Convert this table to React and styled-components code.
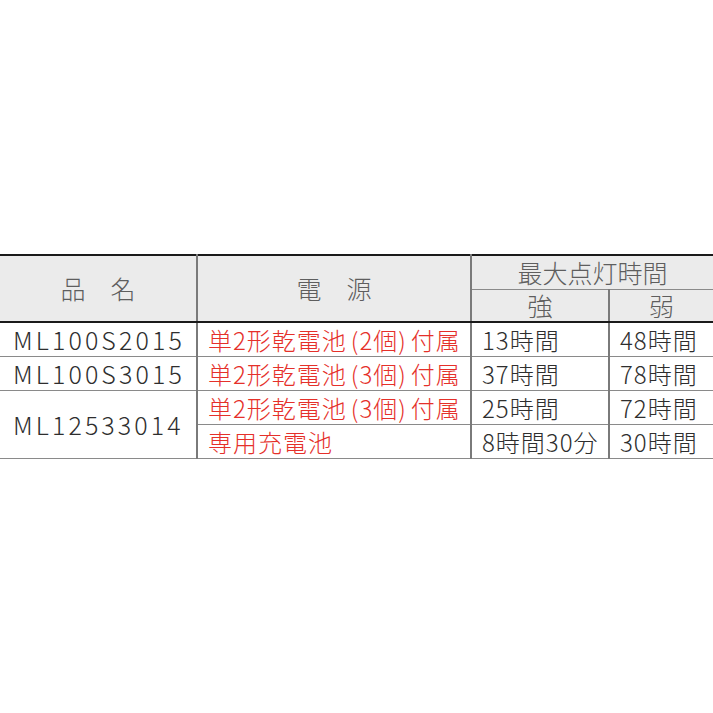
import React from 'react';
import styled, { createGlobalStyle } from 'styled-components';

const GlobalStyle = createGlobalStyle`
  html, body {
    margin: 0;
    padding: 0;
    background: #fff;
  }
`;

const Page = styled.div`
  width: 713px;
  height: 713px;
  display: flex;
  align-items: center;
  font-family: "Noto Sans CJK JP", "Noto Sans", sans-serif;
  font-weight: 300;
`;

const Table = styled.table`
  width: 713px;
  border-collapse: collapse;
  table-layout: fixed;
  border-top: 2px solid #1a1a1a;
  border-bottom: 1px solid #8a8a8a;
`;

const HeadCell = styled.th`
  background: #ebebeb;
  color: #5e5e5e;
  font-weight: 300;
  font-size: 25px;
  line-height: 1;
  text-align: center;
  padding: 0;
  height: ${(p) => p.h || 32}px;
  border-left: ${(p) => (p.first ? 'none' : '2px solid #7a7a7a')};
  border-bottom: ${(p) => (p.sub ? '1px solid #8a8a8a' : '2px solid #1a1a1a')};
`;

const Cell = styled.td`
  color: ${(p) => (p.red ? '#e5302a' : '#2e2e2e')};
  font-size: ${(p) => (p.code ? 25 : 24)}px;
  letter-spacing: ${(p) => (p.code ? 3.1 : 1)}px;
  line-height: 1;
  padding: 0 0 0 ${(p) => (p.code ? 13 : 10)}px;
  height: ${(p) => p.h || 33}px;
  white-space: nowrap;
  border-left: ${(p) => (p.first ? 'none' : '2px solid #7a7a7a')};
  border-bottom: 1px solid #8a8a8a;
`;

// half-width parens with a little air, as in the printed table
const Paren = styled.span`
  margin: ${(p) => (p.open ? '0 0 0 4px' : '0 4px 0 0')};
`;

const Power = ({ n }) => (
  <>
    単2形乾電池<Paren open>(</Paren>{n}個<Paren>)</Paren>付属
  </>
);

const rows = [
  { code: 'ML100S2015', n: 2, strong: '13時間', weak: '48時間' },
  { code: 'ML100S3015', n: 3, strong: '37時間', weak: '78時間' },
];

const App = () => (
  <Page>
    <GlobalStyle />
    <Table>
      <colgroup>
        <col style={{ width: 197 }} />
        <col style={{ width: 274 }} />
        <col style={{ width: 138 }} />
        <col style={{ width: 104 }} />
      </colgroup>
      <thead>
        <tr>
          <HeadCell first rowSpan={2}>品　名</HeadCell>
          <HeadCell rowSpan={2}>電　源</HeadCell>
          <HeadCell colSpan={2} sub h={33}>最大点灯時間</HeadCell>
        </tr>
        <tr>
          <HeadCell h={31}>強</HeadCell>
          <HeadCell h={31}>弱</HeadCell>
        </tr>
      </thead>
      <tbody>
        {rows.map((r) => (
          <tr key={r.code}>
            <Cell first code h={33}>{r.code}</Cell>
            <Cell red h={33}><Power n={r.n} /></Cell>
            <Cell h={33}>{r.strong}</Cell>
            <Cell h={33}>{r.weak}</Cell>
          </tr>
        ))}
        <tr>
          <Cell first code rowSpan={2}>ML12533014</Cell>
          <Cell red><Power n={3} /></Cell>
          <Cell>25時間</Cell>
          <Cell>72時間</Cell>
        </tr>
        <tr>
          <Cell red>専用充電池</Cell>
          <Cell>8時間30分</Cell>
          <Cell>30時間</Cell>
        </tr>
      </tbody>
    </Table>
  </Page>
);

export default App;
